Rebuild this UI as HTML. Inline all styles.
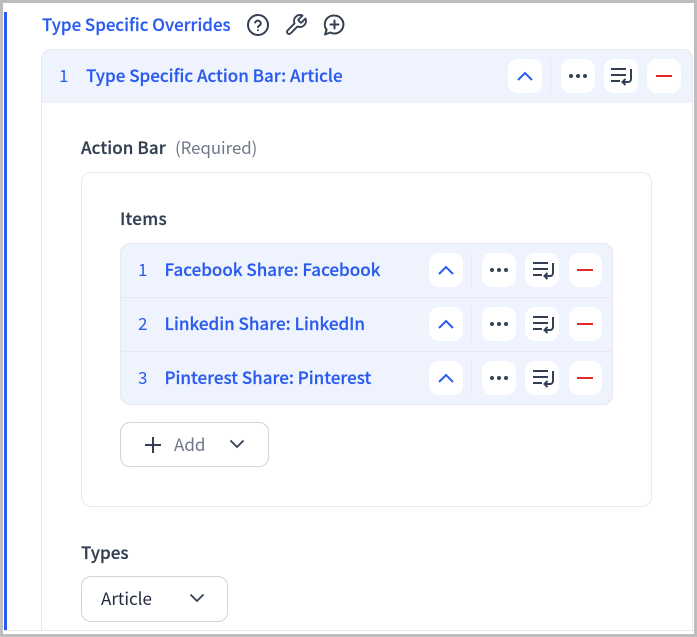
<!DOCTYPE html>
<html><head><meta charset="utf-8"><style>
*{box-sizing:border-box}
html,body{margin:0;padding:0;width:697px;height:637px;overflow:hidden;background:#fff}
body{position:relative;font-family:"Noto Sans CJK SC","Liberation Sans",sans-serif;font-size:17px}
.a{position:absolute}
.t{position:absolute;white-space:nowrap;line-height:24px;height:24px}
.blue{color:#2a5bf0;font-weight:500;-webkit-text-stroke:.2px #2a5bf0}
.dark{color:#333f52;font-weight:500;-webkit-text-stroke:.25px #333f52}
.btn{position:absolute;width:34px;height:34px;background:#fff;border-radius:10px}
.btn svg{position:absolute;left:0;top:0}
.sep{position:absolute;width:1px;height:34px;background:#e6e9f2}
.hl{position:absolute;height:1px;background:#e7e9f1}
</style></head><body>
<div class="a" style="left:0;top:0;width:697px;height:3px;background:#bdbdbd"></div>
<div class="a" style="left:0;top:0;width:3px;height:637px;background:#bdbdbd"></div>
<div class="a" style="left:694px;top:0;width:3px;height:637px;background:#bdbdbd"></div>
<div class="a" style="left:0;top:634px;width:697px;height:3px;background:#bdbdbd"></div>
<div class="a" style="left:4px;top:12px;width:3px;height:618px;background:#2a5bf0"></div>
<div class="a" style="left:4px;top:630px;width:689px;height:1px;background:#e7e9f1"></div>
<div class="a" style="left:41px;top:49px;width:652px;height:582px;border:1px solid #e7e9f1;border-bottom:0;border-radius:10px 10px 0 0"></div>
<div class="a" style="left:41px;top:49px;width:652px;height:54px;background:#eff3fd;border:1px solid #e7e9f1;border-bottom:0;border-radius:10px 10px 0 0"></div>

<div class="t blue" style="left:42px;top:12px;font-size:16.9px">Type Specific Overrides</div>
<svg class="a" style="left:246px;top:13px" width="24" height="24" viewBox="0 0 24 24" fill="none" stroke="#333f52" stroke-width="2" stroke-linecap="round" stroke-linejoin="round"><circle cx="12" cy="12" r="10"/><path d="M9.2 9.5a2.9 2.9 0 0 1 5.6 1c0 1.9-2.8 2.4-2.8 3.6"/><path d="M12 17.200v.1"/></svg>
<svg class="a" style="left:284px;top:13px" width="24" height="24" viewBox="0 0 24 24" fill="none" stroke="#333f52" stroke-width="1.9" stroke-linecap="round" stroke-linejoin="round"><path d="M14.700 6.300a1 1 0 0 0 0 1.400l1.600 1.600a1 1 0 0 0 1.400 0l3.770-3.770a6 6 0 0 1-7.940 7.940l-6.910 6.910a2.120 2.120 0 0 1-3-3l6.910-6.910a6 6 0 0 1 7.940-7.940l-3.760 3.760z"/></svg>
<svg class="a" style="left:322px;top:13px" width="24" height="24" viewBox="0 0 24 24" fill="none" stroke="#333f52" stroke-width="2" stroke-linecap="round" stroke-linejoin="round"><path d="M12.500 2.500a9 9 0 1 1-4.200 17L3 21.500l1.600-4.600A9 9 0 0 1 12.500 2.500z"/><path d="M12.500 7.500v8M8.500 11.500h8"/></svg>

<div class="t" style="left:59px;top:63px;color:#2a5bf0">1</div>
<div class="t blue" style="left:86px;top:63px">Type Specific Action Bar: Article</div>

<div class="btn" style="left:508px;top:59px"><svg width="34" height="34" fill="none" stroke="#2a5bf0" stroke-width="2"><path d="M10 21l7-7 7 7"/></svg></div>
<div class="sep" style="left:550px;top:59px"></div>
<div class="btn" style="left:561px;top:59px"><svg width="34" height="34" fill="#333f52"><circle cx="10" cy="17" r="2"/><circle cx="17" cy="17" r="2"/><circle cx="24" cy="17" r="2"/></svg></div>
<div class="btn" style="left:604px;top:59px"><svg width="34" height="34" fill="none" stroke="#333f52" stroke-width="2"><path d="M7 10h15M7 16h15M7 22h9M27 10v10a3 3 0 0 1-3 3h-5M21.500 20l-3 3 3 3"/></svg></div>
<div class="btn" style="left:647px;top:59px"><svg width="34" height="34" fill="none" stroke="#e02b2b" stroke-width="2"><path d="M9 17h16"/></svg></div>

<div class="t dark" style="left:81px;top:135px;letter-spacing:.1px">Action Bar</div>
<div class="t" style="left:175px;top:135px;color:#6e7787;font-size:16.800px">(Required)</div>

<div class="a" style="left:81px;top:172px;width:571px;height:335px;border:1px solid #e7e9f1;border-radius:10px"></div>
<div class="t dark" style="left:120px;top:206px;letter-spacing:.3px">Items</div>

<div class="a" style="left:120px;top:243px;width:493px;height:162px;background:#eff3fd;border:1px solid #e7e9f1;border-radius:10px"></div>
<div class="hl" style="left:121px;top:297px;width:491px"></div>
<div class="hl" style="left:121px;top:351px;width:491px"></div>

<div class="t" style="left:138px;top:257px;color:#2a5bf0">1</div>
<div class="t blue" style="left:164.500px;top:257px">Facebook Share: Facebook</div>
<div class="t" style="left:138px;top:311px;color:#2a5bf0">2</div>
<div class="t blue" style="left:164.500px;top:311px">Linkedin Share: LinkedIn</div>
<div class="t" style="left:138px;top:365px;color:#2a5bf0">3</div>
<div class="t blue" style="left:164.500px;top:365px">Pinterest Share: Pinterest</div>

<div class="btn" style="left:429px;top:253px"><svg width="34" height="34" fill="none" stroke="#2a5bf0" stroke-width="2"><path d="M10 21l7-7 7 7"/></svg></div>
<div class="sep" style="left:471px;top:253px"></div>
<div class="btn" style="left:482px;top:253px"><svg width="34" height="34" fill="#333f52"><circle cx="10" cy="17" r="2"/><circle cx="17" cy="17" r="2"/><circle cx="24" cy="17" r="2"/></svg></div>
<div class="btn" style="left:525px;top:253px"><svg width="34" height="34" fill="none" stroke="#333f52" stroke-width="2"><path d="M8 10h15M8 16h15M8 22h9M28 10v10a3 3 0 0 1-3 3h-5M22.500 20l-3 3 3 3"/></svg></div>
<div class="btn" style="left:569px;top:253px;width:33px"><svg width="34" height="34" fill="none" stroke="#e02b2b" stroke-width="2"><path d="M8 17h16"/></svg></div>

<div class="btn" style="left:429px;top:307px"><svg width="34" height="34" fill="none" stroke="#2a5bf0" stroke-width="2"><path d="M10 21l7-7 7 7"/></svg></div>
<div class="sep" style="left:471px;top:307px"></div>
<div class="btn" style="left:482px;top:307px"><svg width="34" height="34" fill="#333f52"><circle cx="10" cy="17" r="2"/><circle cx="17" cy="17" r="2"/><circle cx="24" cy="17" r="2"/></svg></div>
<div class="btn" style="left:525px;top:307px"><svg width="34" height="34" fill="none" stroke="#333f52" stroke-width="2"><path d="M8 10h15M8 16h15M8 22h9M28 10v10a3 3 0 0 1-3 3h-5M22.500 20l-3 3 3 3"/></svg></div>
<div class="btn" style="left:569px;top:307px;width:33px"><svg width="34" height="34" fill="none" stroke="#e02b2b" stroke-width="2"><path d="M8 17h16"/></svg></div>

<div class="btn" style="left:429px;top:361px"><svg width="34" height="34" fill="none" stroke="#2a5bf0" stroke-width="2"><path d="M10 21l7-7 7 7"/></svg></div>
<div class="sep" style="left:471px;top:361px"></div>
<div class="btn" style="left:482px;top:361px"><svg width="34" height="34" fill="#333f52"><circle cx="10" cy="17" r="2"/><circle cx="17" cy="17" r="2"/><circle cx="24" cy="17" r="2"/></svg></div>
<div class="btn" style="left:525px;top:361px"><svg width="34" height="34" fill="none" stroke="#333f52" stroke-width="2"><path d="M8 10h15M8 16h15M8 22h9M28 10v10a3 3 0 0 1-3 3h-5M22.500 20l-3 3 3 3"/></svg></div>
<div class="btn" style="left:569px;top:361px;width:33px"><svg width="34" height="34" fill="none" stroke="#e02b2b" stroke-width="2"><path d="M8 17h16"/></svg></div>

<div class="a" style="left:120px;top:422px;width:149px;height:45px;background:#fff;border:1px solid #cfd3de;border-radius:10px"></div>
<svg class="a" style="left:142px;top:434px" width="22" height="22" fill="none" stroke="#333f52" stroke-width="2"><path d="M11 3v16M3 11h16"/></svg>
<div class="t" style="left:174px;top:432px;color:#6e7787">Add</div>
<svg class="a" style="left:227px;top:438px" width="20" height="14" fill="none" stroke="#333f52" stroke-width="1.800"><path d="M3.500 2.500l6.500 6.500 6.500-6.500"/></svg>

<div class="t dark" style="left:81px;top:540px">Types</div>
<div class="a" style="left:81px;top:576px;width:147px;height:46px;background:#fff;border:1px solid #cfd3de;border-radius:10px"></div>
<div class="t" style="left:101px;top:586px;color:#1f2a3d">Article</div>
<svg class="a" style="left:187px;top:592px" width="20" height="14" fill="none" stroke="#333f52" stroke-width="1.800"><path d="M3.500 2.500l6.500 6.500 6.500-6.500"/></svg>
</body></html>
